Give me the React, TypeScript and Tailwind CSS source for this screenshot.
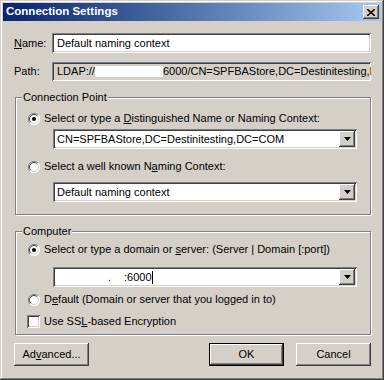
import React from 'react';

const sunken =
  'shadow-[inset_1px_1px_#808080,inset_-1px_-1px_#ffffff,inset_2px_2px_#404040,inset_-2px_-2px_#d4d0c8]';
const raised =
  'shadow-[inset_-1px_-1px_#404040,inset_1px_1px_#ffffff,inset_-2px_-2px_#808080]';

function Radio({ checked }: { checked?: boolean }) {
  return (
    <svg width="12" height="12" viewBox="0 0 12 12" className="shrink-0">
      <circle cx="6" cy="6" r="5.5" fill="#ffffff" />
      <path d="M10 2 A5.5 5.5 0 0 0 2 10" fill="none" stroke="#808080" strokeWidth="1" />
      <path d="M2 10 A5.5 5.5 0 0 0 10 2" fill="none" stroke="#ffffff" strokeWidth="1" />
      <path d="M9.2 2.8 A4.5 4.5 0 0 0 2.8 9.2" fill="none" stroke="#404040" strokeWidth="1" />
      <path d="M2.8 9.2 A4.5 4.5 0 0 0 9.2 2.8" fill="none" stroke="#d4d0c8" strokeWidth="1" />
      {checked && <circle cx="6" cy="6" r="2" fill="#000000" />}
    </svg>
  );
}

function Combo({ children }: { children?: React.ReactNode }) {
  return (
    <div className={`ml-[37px] w-[304px] h-[20px] bg-white flex items-center p-[2px] ${sunken}`}>
      <div className="flex-1 pl-[2px] whitespace-nowrap overflow-hidden">{children}</div>
      <div className={`w-[16px] h-[16px] bg-[#d4d0c8] flex items-center justify-center ${raised}`}>
        <svg width="7" height="4" viewBox="0 0 7 4">
          <path d="M0 0 H7 L3.5 4 Z" fill="#000000" />
        </svg>
      </div>
    </div>
  );
}

function Group({ title, className, children }: { title: string; className: string; children: React.ReactNode }) {
  return (
    <div
      className={`relative ml-[12px] w-[356px] border border-[#808080] shadow-[inset_1px_1px_#ffffff,1px_1px_#ffffff] ${className}`}
    >
      <span className="absolute left-[6px] top-[-8px] px-[1px] bg-[#d4d0c8] leading-[14px]">{title}</span>
      {children}
    </div>
  );
}

export default function App() {
  return (
    <div
      className="w-[384px] h-[380px] bg-[#d4d0c8] p-[3px] flex flex-col text-[11px] text-black shadow-[inset_-1px_-1px_#404040,inset_1px_1px_#d4d0c8,inset_-2px_-2px_#808080,inset_2px_2px_#ffffff] overflow-hidden"
      style={{ fontFamily: '"Liberation Sans", Arial, sans-serif' }}
    >
      <div className="h-[18px] bg-linear-to-r from-[#0a246a] to-[#a6caf0] flex items-center pl-[3px] pr-[2px]">
        <span className="flex-1 text-white font-bold text-[11.5px]">Connection Settings</span>
        <div className={`w-[16px] h-[14px] bg-[#d4d0c8] flex items-center justify-center ${raised}`}>
          <svg width="8" height="7" viewBox="0 0 8 7">
            <path d="M0 0 L8 7 M8 0 L0 7" stroke="#000000" strokeWidth="1.6" />
          </svg>
        </div>
      </div>

      <div className="mt-[12px] flex items-center">
        <div className="w-[49px] pl-[11px]">
          <span className="underline">N</span>ame:
        </div>
        <div className={`w-[319px] h-[20px] bg-white flex items-center pl-[5px] ${sunken}`}>
          Default naming context
        </div>
      </div>

      <div className="mt-[9px] flex items-center">
        <div className="w-[49px] pl-[11px]">Path:</div>
        <div className={`w-[319px] h-[19px] bg-[#d4d0c8] flex items-center pl-[5px] pr-[2px] whitespace-nowrap overflow-hidden ${sunken}`}>
          <span className="shrink-0">LDAP://</span>
          <span className="shrink-0 inline-block w-[68px] h-[11px] bg-white" />
          <span className="shrink-0">6000/CN=SPFBAStore,DC=Destinitesting,DC=COM</span>
        </div>
      </div>

      <Group title="Connection Point" className="mt-[16px] h-[118px] pt-[14px]">
        <div className="flex items-center h-[13px] pl-[12px] gap-[4px]">
          <Radio checked />
          <span>
            Select or type a <span className="underline">D</span>istinguished Name or Naming Context:
          </span>
        </div>
        <div className="mt-[4px]">
          <Combo>CN=SPFBAStore,DC=Destinitesting,DC=COM</Combo>
        </div>
        <div className="mt-[11px] flex items-center h-[13px] pl-[12px] gap-[4px]">
          <Radio />
          <span>
            Select a well known N<span className="underline">a</span>ming Context:
          </span>
        </div>
        <div className="mt-[9px]">
          <Combo>Default naming context</Combo>
        </div>
      </Group>

      <Group title="Computer" className="mt-[16px] h-[104px] pt-[11px]">
        <div className="flex items-center h-[13px] pl-[12px] gap-[4px]">
          <Radio checked />
          <span>
            Select or type a domain or <span className="underline">s</span>erver: (Server | Domain [:port])
          </span>
        </div>
        <div className="mt-[11px]">
          <Combo>
            <span className="pl-[51px]">.</span>
            <span className="pl-[13px]">:6000</span>
            <span className="inline-block w-[1px] h-[13px] bg-black align-middle" />
          </Combo>
        </div>
        <div className="mt-[6px] flex items-center h-[13px] pl-[12px] gap-[4px]">
          <Radio />
          <span>
            D<span className="underline">e</span>fault (Domain or server that you logged in to)
          </span>
        </div>
        <div className="mt-[9px] flex items-center h-[13px] pl-[11px] gap-[4px]">
          <div className={`w-[13px] h-[13px] bg-white ${sunken}`} />
          <span>
            Use SS<span className="underline">L</span>-based Encryption
          </span>
        </div>
      </Group>

      <div className="mt-[8px] flex items-center h-[23px]">
        <button className={`ml-[11px] w-[75px] h-[23px] bg-[#d4d0c8] ${raised}`}>
          Ad<span className="underline">v</span>anced...
        </button>
        <button className="ml-[120px] w-[75px] h-[23px] bg-[#d4d0c8] border border-black shadow-[inset_-1px_-1px_#404040,inset_1px_1px_#ffffff,inset_-2px_-2px_#808080]">
          OK
        </button>
        <button className={`ml-[12px] w-[75px] h-[23px] bg-[#d4d0c8] ${raised}`}>Cancel</button>
      </div>
    </div>
  );
}
